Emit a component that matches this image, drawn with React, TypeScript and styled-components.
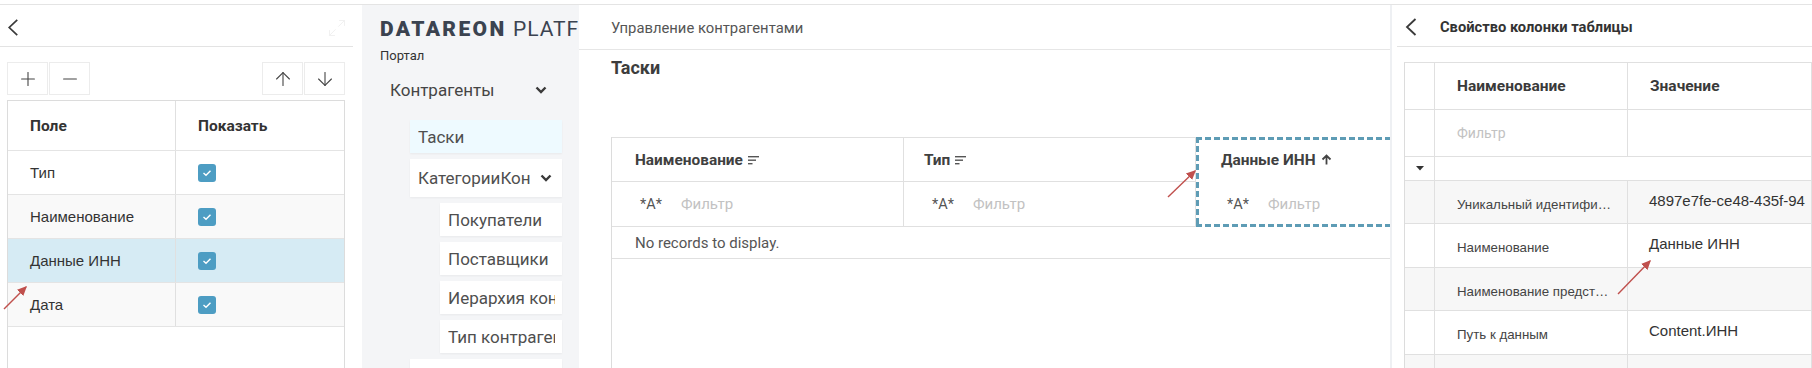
import styled, { createGlobalStyle, css } from "styled-components";
import { Plus, Minus, ArrowUp, ArrowDown, Maximize2 } from "lucide-react";

const GlobalStyle = createGlobalStyle`
  html, body {
    margin: 0;
    padding: 0;
    background: #fff;
  }
  body {
    font-family: Roboto, "Liberation Sans", sans-serif;
    color: #333;
  }
  * {
    box-sizing: border-box;
  }
`;

const Page = styled.div`
  position: relative;
  width: 1812px;
  height: 368px;
  overflow: hidden;
  background: #fff;
  padding-top: 4px;
`;

const Frame = styled.div`
  display: flex;
  height: 364px;
  border-top: 1px solid #e4e4e4;
`;

/* ---------- left: columns editor ---------- */

const LeftPanel = styled.section`
  width: 353px;
  flex: none;
  display: flex;
  flex-direction: column;
`;

const LeftHeader = styled.div`
  height: 42px;
  flex: none;
  display: flex;
  align-items: center;
  justify-content: space-between;
  padding: 4px 6px 0 7px;
  border-bottom: 1px solid #e3e3e3;
`;

const Toolbar = styled.div`
  display: flex;
  justify-content: space-between;
  margin: 15px 8px 0 7px;
`;

const ToolGroup = styled.div`
  display: flex;
  gap: 1px;
`;

const ToolButton = styled.button`
  width: 41px;
  height: 33px;
  padding: 0;
  display: flex;
  align-items: center;
  justify-content: center;
  background: #fff;
  border: 1px solid #ececec;
  color: #444;
  cursor: pointer;
`;

const FieldTable = styled.div`
  flex: 1;
  margin: 5px 8px 0 7px;
  border: 1px solid #dcdcdc;
  border-bottom: none;
`;

const FieldRow = styled.div<{ $head?: boolean; $bg?: string }>`
  display: grid;
  grid-template-columns: 167px 1fr;
  height: ${({ $head }) => ($head ? "50px" : "44px")};
  background: ${({ $bg }) => $bg || "#fff"};
  border-bottom: 1px solid #e4e4e4;
`;

const FieldCell = styled.div<{ $head?: boolean }>`
  display: flex;
  align-items: center;
  padding-left: 22px;
  font-family: ${({ $head }) =>
    $head ? "Roboto, sans-serif" : '"Liberation Sans", Arial, sans-serif'};
  font-size: ${({ $head }) => ($head ? "15.5px" : "15px")};
  font-weight: ${({ $head }) => ($head ? 700 : 400)};
  color: #333;
  & + & {
    border-left: 1px solid #e0e0e0;
  }
`;

const Check = styled.span`
  width: 18px;
  height: 18px;
  border-radius: 3px;
  background: #4d9dc3;
  display: flex;
  align-items: center;
  justify-content: center;
`;

/* ---------- sidebar ---------- */

const Sidebar = styled.nav`
  width: 217px;
  flex: none;
  margin-left: 9px;
  padding: 12px 0 0 18px;
  background: #f4f5f7;
  overflow: hidden;
`;

const Brand = styled.div`
  width: 199px;
  overflow: hidden;
  font-family: Roboto, sans-serif;
  font-size: 21px;
  line-height: 24px;
  color: #3b4350;
  white-space: nowrap;
  letter-spacing: 1px;
  b {
    font-weight: 900;
    letter-spacing: 2.4px;
  }
`;

const Portal = styled.div`
  margin-top: 7px;
  font-size: 13px;
  line-height: 16px;
  color: #333;
`;

const Group = styled.div`
  width: 157px;
  height: 24px;
  margin: 14px 0 0 10px;
  display: flex;
  align-items: center;
  justify-content: space-between;
  font-size: 17px;
  color: #454545;
`;

const NavList = styled.div`
  margin-top: 18px;
  display: flex;
  flex-direction: column;
  gap: 6px;
`;

const NavItem = styled.div<{ $indent?: boolean; $active?: boolean; $tall?: boolean }>`
  height: ${({ $tall }) => ($tall ? "38px" : "33px")};
  margin-left: ${({ $indent }) => ($indent ? "60px" : "30px")};
  width: ${({ $indent }) => ($indent ? "122px" : "152px")};
  padding: 0 ${({ $indent }) => ($indent ? 7 : 10)}px 0 8px;
  display: flex;
  align-items: center;
  gap: 4px;
  background: ${({ $active }) => ($active ? "#eefaff" : "#fff")};
  box-shadow: 0 1px 2px rgba(0, 0, 0, 0.05);
  font-size: 17px;
  color: #4f4f4f;
  flex: none;
`;

const NavLabel = styled.span`
  flex: 1;
  min-width: 0;
  white-space: nowrap;
  overflow: hidden;
`;

/* ---------- main ---------- */

const Main = styled.main`
  width: 813px;
  flex: none;
  display: flex;
  flex-direction: column;
  border-right: 2px solid #eef0f3;
  overflow: hidden;
`;

const Breadcrumb = styled.div`
  height: 45px;
  flex: none;
  display: flex;
  align-items: center;
  padding: 1px 0 0 32px;
  border-bottom: 1px solid #e6e6e6;
  font-size: 14.8px;
  color: #555;
`;

const PageTitle = styled.h1`
  margin: 7px 0 0 32px;
  font-size: 18px;
  line-height: 22px;
  font-weight: 700;
  color: #3d3d3d;
`;

const Grid = styled.div`
  margin: 58px 0 0 32px;
  width: 900px;
  flex: 1;
  border-left: 1px solid #dcdcdc;
`;

const HeadRow = styled.div`
  display: flex;
`;

const dashed = "#5e9cb5";

const HeadColumn = styled.div<{ $active?: boolean }>`
  width: 292px;
  flex: none;
  border-top: 1px solid #e0e0e0;
  border-right: 1px solid #e0e0e0;
  ${({ $active }) =>
    $active &&
    css`
      width: 320px;
      border-top-color: transparent;
      border-right-color: transparent;
      background:
        repeating-linear-gradient(90deg, ${dashed} 0 6px, transparent 6px 9px) top left / 100% 3px no-repeat,
        repeating-linear-gradient(90deg, ${dashed} 0 6px, transparent 6px 9px) bottom left / 100% 3px no-repeat,
        repeating-linear-gradient(180deg, ${dashed} 0 6px, transparent 6px 9px) top left / 3px 100% no-repeat;
      background-origin: border-box;
    `}
`;

const HeadCell = styled.div<{ $active?: boolean; $pad?: number }>`
  height: 44px;
  display: flex;
  align-items: center;
  gap: 5px;
  padding-left: ${({ $pad }) => $pad ?? 23}px;
  border-bottom: 1px solid ${({ $active }) => ($active ? "transparent" : "#e0e0e0")};
  font-size: 15.4px;
  font-weight: 700;
  color: #404040;
`;

const FilterCell = styled.div<{ $active?: boolean }>`
  height: 45px;
  display: flex;
  align-items: center;
  gap: 19px;
  padding-left: ${({ $active }) => ($active ? 31 : 28)}px;
  border-bottom: 1px solid ${({ $active }) => ($active ? "transparent" : "#e0e0e0")};
`;

const Mask = styled.span`
  font-size: 14.5px;
  color: #555;
`;

const Placeholder = styled.span<{ $size?: number }>`
  font-size: ${({ $size }) => $size ?? 15}px;
  color: #c2c2c2;
`;

const EmptyRow = styled.div`
  height: 32px;
  display: flex;
  align-items: center;
  padding-left: 23px;
  border-bottom: 1px solid #e0e0e0;
  font-size: 15px;
  color: #555;
`;

/* ---------- right: property panel ---------- */

const RightPanel = styled.aside`
  flex: 1;
  display: flex;
  flex-direction: column;
  overflow: hidden;
`;

const RightHeader = styled.div`
  height: 42px;
  flex: none;
  margin-left: 5px;
  padding: 2px 0 0 8px;
  display: flex;
  align-items: center;
  gap: 23px;
  border-bottom: 1px solid #e3e3e3;
  font-size: 14.7px;
  font-weight: 700;
  color: #333;
`;

const PropTable = styled.div`
  flex: 1;
  margin: 15px 0 0 12px;
  border-left: 1px solid #dcdcdc;
  border-top: 1px solid #e0e0e0;
`;

const PropRow = styled.div<{ $h: number; $alt?: boolean }>`
  display: grid;
  grid-template-columns: 30px 193px 1fr;
  height: ${({ $h }) => $h}px;
  background: ${({ $alt }) => ($alt ? "#f7f7f7" : "#fff")};
  border-bottom: 1px solid #e0e0e0;
`;

const PropCell = styled.div<{ $kind?: "head" | "name" | "value"; $span?: boolean }>`
  display: flex;
  align-items: center;
  padding-left: 22px;
  border-right: 1px solid #e0e0e0;
  white-space: nowrap;
  overflow: hidden;
  ${({ $span }) => $span && "grid-column: 2 / 4;"}
  ${({ $kind }) =>
    $kind === "head"
      ? css`
          font-size: 15.5px;
          font-weight: 700;
          color: #3a3a3a;
        `
      : $kind === "name"
      ? css`
          padding-top: 4px;
          font-family: "Liberation Sans", Arial, sans-serif;
          font-size: 13.3px;
          color: #444;
        `
      : $kind === "value"
      ? css`
          padding: 0 0 4px 21px;
          font-family: "Liberation Sans", Arial, sans-serif;
          font-size: 15px;
          color: #333;
        `
      : ""}
`;

const Ellipsis = styled.span`
  display: block;
  max-width: 156px;
  overflow: hidden;
  text-overflow: ellipsis;
`;

const Overlay = styled.svg`
  position: absolute;
  left: 0;
  top: 0;
  pointer-events: none;
`;

/* ---------- icons ---------- */

const Back = ({ h = 17 }: { h?: number }) => (
  <svg width="12" height={h} viewBox="0 0 12 18" fill="none">
    <polyline points="10.5,1 2,9 10.5,17" stroke="#3a3a3a" strokeWidth="1.8" />
  </svg>
);

const Chevron = () => (
  <svg width="12" height="8" viewBox="0 0 12 8" fill="none">
    <polyline points="1.5,1.5 6,6 10.5,1.5" stroke="#3a3a3a" strokeWidth="2.4" />
  </svg>
);

const SortLines = () => (
  <svg width="11" height="10" viewBox="0 0 11 10">
    <rect x="0" y="1" width="11" height="1.4" fill="#555" />
    <rect x="0" y="4.5" width="8" height="1.4" fill="#555" />
    <rect x="0" y="8" width="4.5" height="1.4" fill="#555" />
  </svg>
);

const SortUp = () => (
  <svg width="11" height="11" viewBox="0 0 11 11" fill="none">
    <path d="M5.5 10.5V1.5M1.5 5.5l4-4 4 4" stroke="#444" strokeWidth="1.8" />
  </svg>
);

const CheckMark = () => (
  <Check>
    <svg width="10" height="8" viewBox="0 0 10 8" fill="none">
      <polyline points="1.5,4 4,6.3 8.5,1.7" stroke="#fff" strokeWidth="1.4" />
    </svg>
  </Check>
);

const fields = [
  { name: "Тип" },
  { name: "Наименование", bg: "#f9f9f9" },
  { name: "Данные ИНН", bg: "#d6ebf4" },
  { name: "Дата", bg: "#f9f9f9" },
];

const subItems = ["Покупатели", "Поставщики", "Иерархия контрагентов", "Тип контрагента"];

const props = [
  { name: "Уникальный идентификатор", value: "4897e7fe-ce48-435f-94", h: 43 },
  { name: "Наименование", value: "Данные ИНН", h: 44 },
  { name: "Наименование представления", value: "", h: 43 },
  { name: "Путь к данным", value: "Content.ИНН", h: 44 },
  { name: "", value: "", h: 44 },
];

const arrows = [
  [4, 309, 26, 287],
  [1168, 197, 1195, 171],
  [1618, 294, 1650, 261],
];

export default function App() {
  return (
    <>
      <GlobalStyle />
      <Page>
        <Frame>
          <LeftPanel>
            <LeftHeader>
              <Back />
              <Maximize2 size={20} color="#f1f1f1" strokeWidth={1.2} />
            </LeftHeader>
            <Toolbar>
              <ToolGroup>
                <ToolButton>
                  <Plus size={22} strokeWidth={1.2} />
                </ToolButton>
                <ToolButton>
                  <Minus size={22} strokeWidth={1.2} />
                </ToolButton>
              </ToolGroup>
              <ToolGroup>
                <ToolButton>
                  <ArrowUp size={22} strokeWidth={1.2} />
                </ToolButton>
                <ToolButton>
                  <ArrowDown size={22} strokeWidth={1.2} />
                </ToolButton>
              </ToolGroup>
            </Toolbar>
            <FieldTable>
              <FieldRow $head>
                <FieldCell $head>Поле</FieldCell>
                <FieldCell $head>Показать</FieldCell>
              </FieldRow>
              {fields.map((f) => (
                <FieldRow key={f.name} $bg={f.bg}>
                  <FieldCell>{f.name}</FieldCell>
                  <FieldCell>
                    <CheckMark />
                  </FieldCell>
                </FieldRow>
              ))}
            </FieldTable>
          </LeftPanel>

          <Sidebar>
            <Brand>
              <b>DATAREON</b> PLATFORM
            </Brand>
            <Portal>Портал</Portal>
            <Group>
              Контрагенты
              <Chevron />
            </Group>
            <NavList>
              <NavItem $active>
                <NavLabel>Таски</NavLabel>
              </NavItem>
              <NavItem $tall>
                <NavLabel>КатегорииКон</NavLabel>
                <Chevron />
              </NavItem>
              {subItems.map((s) => (
                <NavItem key={s} $indent>
                  <NavLabel>{s}</NavLabel>
                </NavItem>
              ))}
              <NavItem>
                <NavLabel>Контакты</NavLabel>
              </NavItem>
            </NavList>
          </Sidebar>

          <Main>
            <Breadcrumb>Управление контрагентами</Breadcrumb>
            <PageTitle>Таски</PageTitle>
            <Grid>
              <HeadRow>
                <HeadColumn>
                  <HeadCell>
                    Наименование <SortLines />
                  </HeadCell>
                  <FilterCell>
                    <Mask>*A*</Mask>
                    <Placeholder>Фильтр</Placeholder>
                  </FilterCell>
                </HeadColumn>
                <HeadColumn>
                  <HeadCell $pad={20}>
                    Тип <SortLines />
                  </HeadCell>
                  <FilterCell>
                    <Mask>*A*</Mask>
                    <Placeholder>Фильтр</Placeholder>
                  </FilterCell>
                </HeadColumn>
                <HeadColumn $active>
                  <HeadCell $active $pad={25}>
                    Данные ИНН <SortUp />
                  </HeadCell>
                  <FilterCell $active>
                    <Mask>*A*</Mask>
                    <Placeholder>Фильтр</Placeholder>
                  </FilterCell>
                </HeadColumn>
              </HeadRow>
              <EmptyRow>No records to display.</EmptyRow>
            </Grid>
          </Main>

          <RightPanel>
            <RightHeader>
              <Back h={18} />
              Свойство колонки таблицы
            </RightHeader>
            <PropTable>
              <PropRow $h={47}>
                <PropCell />
                <PropCell $kind="head">Наименование</PropCell>
                <PropCell $kind="head">Значение</PropCell>
              </PropRow>
              <PropRow $h={47}>
                <PropCell />
                <PropCell>
                  <Placeholder $size={14}>Фильтр</Placeholder>
                </PropCell>
                <PropCell />
              </PropRow>
              <PropRow $h={24}>
                <PropCell style={{ paddingLeft: 11 }}>
                  <svg width="8" height="5" viewBox="0 0 8 5">
                    <polygon points="0,0 8,0 4,4.5" fill="#333" />
                  </svg>
                </PropCell>
                <PropCell $span />
              </PropRow>
              {props.map((p, i) => (
                <PropRow key={i} $h={p.h} $alt={i % 2 === 0}>
                  <PropCell />
                  <PropCell $kind="name">
                    <Ellipsis>{p.name}</Ellipsis>
                  </PropCell>
                  <PropCell $kind="value">{p.value}</PropCell>
                </PropRow>
              ))}
            </PropTable>
          </RightPanel>
        </Frame>

        <Overlay width="1812" height="368">
          <defs>
            <marker id="head" markerWidth="8" markerHeight="8" refX="6" refY="4" orient="auto">
              <path d="M0,0.8 L7,4 L0,7.2 z" fill="#c0504d" />
            </marker>
          </defs>
          {arrows.map(([x1, y1, x2, y2], i) => (
            <line
              key={i}
              x1={x1}
              y1={y1}
              x2={x2}
              y2={y2}
              stroke="#c0504d"
              strokeWidth="1.4"
              markerEnd="url(#head)"
            />
          ))}
        </Overlay>
      </Page>
    </>
  );
}
